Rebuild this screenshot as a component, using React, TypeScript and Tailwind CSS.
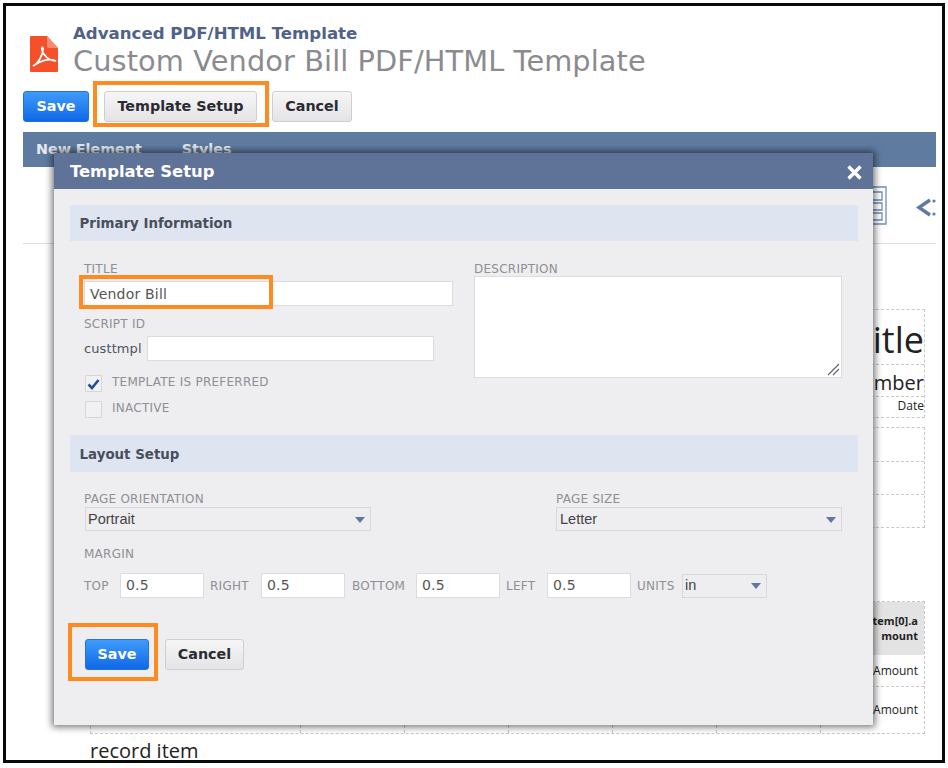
const labelFont = "font-['Open_Sans','DejaVu_Sans',sans-serif]"

function Label({ children, className = '' }: { children: React.ReactNode; className?: string }) {
  return <div className={`font-['DejaVu_Sans',sans-serif] text-[12px] leading-[14px] tracking-[0.25px] text-[#8f8f94] ${className}`}>{children}</div>
}

function Field({ value, className = '' }: { value?: string; className?: string }) {
  return (
    <div className={`h-[25px] bg-white border border-[#dcdce0] flex items-center font-['DejaVu_Sans',sans-serif] text-[14px] tracking-[0.2px] text-[#555] ${className}`}>
      {value}
    </div>
  )
}

function Select({ value, className = '' }: { value: string; className?: string }) {
  return (
    <div className={`h-[24px] border border-[#d8d8dc] flex items-center justify-between pl-[2px] pr-[5px] pt-[1px] font-['Liberation_Sans',sans-serif] text-[14.5px] text-[#444] ${className}`}>
      <span>{value}</span>
      <span className="w-0 h-0 border-x-[5px] border-x-transparent border-t-[6px] border-t-[#5f789f]" />
    </div>
  )
}

function Check({ on }: { on?: boolean }) {
  return (
    <div className="w-[17px] h-[17px] bg-[#f1f0f3] border border-[#d6d6da] flex items-center justify-center">
      {on && (
        <svg width="13" height="12" viewBox="0 0 13 12">
          <path d="M1.5 6.5 L5 10 L11.5 2" fill="none" stroke="#24509a" strokeWidth="2.6" />
        </svg>
      )}
    </div>
  )
}

function Btn({ children, primary, className = '' }: { children: React.ReactNode; primary?: boolean; className?: string }) {
  return (
    <div
      className={`h-[31px] rounded-[3px] flex items-center justify-center font-['DejaVu_Sans',sans-serif] font-bold text-[14.3px] ${
        primary
          ? 'bg-gradient-to-b from-[#3f9bfb] to-[#0f67e6] text-white border border-[#1f74e0]'
          : 'bg-gradient-to-b from-[#f7f6f7] to-[#e4e3e5] text-[#2a2a33] border border-[#cfcfd2]'
      } ${className}`}
    >
      {children}
    </div>
  )
}

function SectionBar({ children, className = '' }: { children: React.ReactNode; className?: string }) {
  return (
    <div className={`bg-[#dfe5f0] flex items-center pl-[9.5px] pt-[3px] font-['DejaVu_Sans',sans-serif] font-bold text-[13.4px] text-[#484f5c] ${className}`}>
      {children}
    </div>
  )
}

function Orange({ className }: { className: string }) {
  return <div className={`absolute border-[4px] border-[#ff8a1f] ${className}`} />
}

function PdfIcon() {
  return (
    <svg width="28" height="37" viewBox="0 0 28 37">
      <path d="M1 0 H17 L28 12 V35 Q28 36 27 36 H1 Q0 36 0 35 V1 Q0 0 1 0 Z" fill="#f6502b" />
      <path d="M17 0 L28 12 H19 Q17 12 17 10 Z" fill="#fa8a70" />
      <path d="M3 30 C9 27 13 18 13 13 C13 10 11 11 12 14 C13 19 19 25 26 25 C20 22 11 24 3 30 Z" fill="none" stroke="#fff" strokeWidth="1.7" />
    </svg>
  )
}

const tableCols = [0, 1, 2, 3, 4, 5]

export default function App() {
  return (
    <div className="relative w-[948px] h-[768px] bg-white overflow-hidden p-[3px] pb-[5px]">
      <div className="relative h-full border-[3px] border-[#0a0a0a] bg-white overflow-hidden pl-[17px] pr-[6px]">
        {/* page header */}
        <div className="flex pt-[18px] pl-[7px] h-[81px]">
          <div className="pt-[12px] mr-[15px]"><PdfIcon /></div>
          <div className="font-['DejaVu_Sans',sans-serif]">
            <div className="font-bold text-[16.6px] leading-[20px] text-[#4f6288]">Advanced PDF/HTML Template</div>
            <div className="text-[28.8px] leading-[34px] text-[#8b8b8f] tracking-[0.1px]">Custom Vendor Bill PDF/HTML Template</div>
          </div>
        </div>
        <div className="flex items-center h-[31px] mt-[4px]">
          <Btn primary className="w-[66px]">Save</Btn>
          <Btn className="w-[153px] ml-[15px]">Template Setup</Btn>
          <Btn className="w-[80px] ml-[15px]">Cancel</Btn>
        </div>
        {/* tab bar behind the dialog */}
        <div className="mt-[10px] h-[35px] bg-[#5f7ba0] flex items-center pl-[13px] gap-[40px] font-['DejaVu_Sans',sans-serif] font-bold text-[14.3px] text-white/85">
          <span>New Element</span>
          <span>Styles</span>
        </div>
        <div className="h-[77px] border-b border-[#dddde0] flex justify-end items-start pt-[19px]">
          <svg width="64" height="40" viewBox="0 0 64 40">
            <path d="M1 1 H14 V38 H1" fill="none" stroke="#6f8fb8" strokeWidth="1.3" />
            <path d="M1 6 H10 V14 H1 M1 17 H10 V24 H1 M1 27 H10 V34 H1" fill="none" stroke="#6f8fb8" strokeWidth="1.3" />
            <path d="M58 14 L47 21.5 L58 29" fill="none" stroke="#5f7ba0" strokeWidth="3.4" />
            <circle cx="62" cy="15" r="1.6" fill="#5f7ba0" />
            <circle cx="62" cy="28" r="1.6" fill="#5f7ba0" />
          </svg>
        </div>
        {/* template canvas behind the dialog */}
        <div className="flex flex-col items-end pr-[11px] pt-[65px] font-['Open_Sans',sans-serif] text-[#222]">
          <div className="w-[80px] border border-dashed border-[#c8c8c8] text-right">
            <div className="h-[54px] text-[36px] leading-[60px] overflow-hidden">itle</div>
            <div className="h-[32px] text-[20px] leading-[36px] border-t border-dashed border-[#c8c8c8] overflow-hidden">mber</div>
            <div className="h-[21px] text-[12px] leading-[18px] border-t border-dashed border-[#c8c8c8]">Date</div>
          </div>
          <div className="w-[80px] mt-[9px] border border-dashed border-[#c8c8c8]">
            <div className="h-[33px]" />
            <div className="h-[33px] border-t border-dashed border-[#c8c8c8]" />
            <div className="h-[33px] border-t border-dashed border-[#c8c8c8]" />
          </div>
          <div className="w-[835px] h-[133px] mt-[73px] flex border border-dashed border-[#c8c8c8]">
            {tableCols.map(i => (
              <div key={i} className={`border-r border-dashed border-[#c8c8c8] ${i === 0 ? 'w-[210px]' : 'w-[104px]'}`} />
            ))}
            <div className="flex-1 text-right text-[12px] leading-[15px]">
              <div className="h-[53px] bg-[#e3e3e3] text-[11px] font-bold pt-[11px] pr-[6px] whitespace-nowrap">item[0].a<br />mount</div>
              <div className="h-[32px] pr-[6px] pt-[8px] border-b border-dashed border-[#c8c8c8]">Amount</div>
              <div className="h-[46px] pr-[6px] pt-[15px]">Amount</div>
            </div>
          </div>
        </div>
        <div className={`absolute left-[84px] top-[733px] text-[20px] leading-[24px] text-[#222] ${labelFont}`}>record item</div>

        {/* dialog */}
        <div className="absolute left-[48px] top-[147px] w-[819px] h-[572px] bg-[#eeedf0] shadow-[0_0_7px_2px_rgba(0,0,0,0.55)]">
          <div className="h-[36px] bg-[#5f7399] flex items-center justify-between pl-[16px] pr-[11px] pt-[2px] font-['DejaVu_Sans',sans-serif] font-bold text-[16.4px] text-white">
            <span>Template Setup</span>
            <svg width="15" height="15" viewBox="0 0 15 15">
              <path d="M1.5 1.5 L13.5 13.5 M13.5 1.5 L1.5 13.5" stroke="#fff" strokeWidth="3.4" />
            </svg>
          </div>
          <div className="pt-[16px] pl-[16px] pr-[15px]">
            <SectionBar className="h-[36px]">Primary Information</SectionBar>
            <div className="flex pl-[14px] pt-[21px] h-[194px]">
              <div className="w-[369px]">
                <Label>TITLE</Label>
                <Field value="Vendor Bill" className="mt-[5px] pl-[5px] pt-[2px] w-[369px]" />
                <Label className="mt-[11px]">SCRIPT ID</Label>
                <div className="flex items-center mt-[5px]">
                  <span className="w-[63px] font-['DejaVu_Sans',sans-serif] text-[13px] tracking-[0.1px] text-[#4c5560]">custtmpl</span>
                  <Field className="w-[287px]" />
                </div>
                <div className="flex items-start gap-[10px] mt-[14px] pl-[1px]">
                  <Check on />
                  <Label>TEMPLATE IS PREFERRED</Label>
                </div>
                <div className="flex items-start gap-[10px] mt-[9px] pl-[1px]">
                  <Check />
                  <Label>INACTIVE</Label>
                </div>
              </div>
              <div className="ml-[21px] w-[368px]">
                <Label>DESCRIPTION</Label>
                <div className="relative h-[102px] bg-white border border-[#dcdce0]">
                  <svg className="absolute right-[1px] bottom-[1px]" width="13" height="13" viewBox="0 0 13 13">
                    <path d="M1 12 L12 1 M6 12 L12 6" stroke="#666" strokeWidth="1.2" />
                  </svg>
                </div>
              </div>
            </div>
            <SectionBar className="h-[37px]">Layout Setup</SectionBar>
            <div className="flex pl-[14px] pt-[20px]">
              <div className="w-[287px]">
                <Label>PAGE ORIENTATION</Label>
                <Select value="Portrait" className="mt-[1px] ml-[1px] w-[286px]" />
              </div>
              <div className="ml-[185px] w-[286px]">
                <Label>PAGE SIZE</Label>
                <Select value="Letter" className="mt-[1px] pl-[3px]" />
              </div>
            </div>
            <Label className="pl-[14px] mt-[16px]">MARGIN</Label>
            <div className="flex items-center pl-[14px] mt-[12px]">
              <Label className="w-[36px]">TOP</Label>
              <Field value="0.5" className="w-[84px] pl-[5px]" />
              <Label className="w-[57px] pl-[6px]">RIGHT</Label>
              <Field value="0.5" className="w-[84px] pl-[5px]" />
              <Label className="w-[71px] pl-[7px]">BOTTOM</Label>
              <Field value="0.5" className="w-[84px] pl-[5px]" />
              <Label className="w-[47px] pl-[6px]">LEFT</Label>
              <Field value="0.5" className="w-[84px] pl-[5px]" />
              <Label className="w-[51px] pl-[6px]">UNITS</Label>
              <Select value="in" className="w-[85px]" />
            </div>
            <div className="flex pl-[15px] mt-[41px]">
              <Btn primary className="w-[64px]">Save</Btn>
              <Btn className="w-[79px] ml-[16px]">Cancel</Btn>
            </div>
          </div>
        </div>

        {/* tutorial highlights */}
        <Orange className="left-[87px] top-[75px] w-[176px] h-[46px]" />
        <Orange className="left-[73px] top-[269px] w-[194px] h-[34px]" />
        <Orange className="left-[62px] top-[617px] w-[90px] h-[58px]" />
      </div>
    </div>
  )
}
